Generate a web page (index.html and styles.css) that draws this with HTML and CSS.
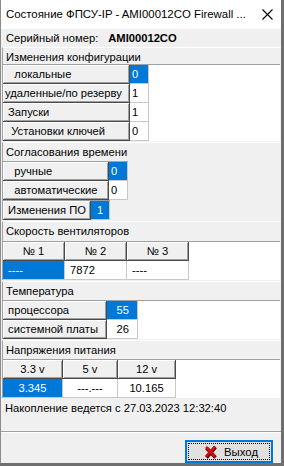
FILE: index.html
```html
<!DOCTYPE html>
<html lang="ru">
<head>
    <meta charset="UTF-8">
    <title>Состояние ФПСУ-IP</title>
    <link rel="stylesheet" href="styles.css">
</head>
<body>
    <div class="window">
        <div class="titlebar">
            <span class="title">Состояние ФПСУ-IP - AMI00012CO Firewall ...</span>
            <svg class="close" width="11" height="11" viewBox="0 0 11 11">
                <path d="M0.5 0.5 L10.5 10.5 M10.5 0.5 L0.5 10.5" stroke="#000" stroke-width="1.1" fill="none"/>
            </svg>
        </div>

        <div class="serial">
            <span>Серийный номер:</span>
            <b>AMI00012CO</b>
        </div>

        <div class="group g-config">
            <div class="caption">Изменения конфигурации</div>
            <div class="sg sg-config">
                <div class="fx">   локальные</div><div class="c sel">0</div>
                <div class="fx">удаленные/по резерву</div><div class="c">1</div>
                <div class="fx"> Запуски</div><div class="c">1</div>
                <div class="fx">  Установки ключей</div><div class="c">0</div>
            </div>
        </div>

        <div class="group g-time">
            <div class="caption">Согласования времени</div>
            <div class="sg sg-time">
                <div class="fx">   ручные</div><div class="c sel">0</div>
                <div class="fx">   автоматические</div><div class="c">0</div>
            </div>
        </div>

        <div class="group g-po">
            <div class="sg sg-po">
                <div class="fx"> Изменения ПО</div><div class="c sel ctr">1</div>
            </div>
        </div>

        <div class="group g-fans">
            <div class="caption">Скорость вентиляторов</div>
            <div class="sg sg-fans">
                <div class="fx ctr">№ 1</div><div class="fx ctr">№ 2</div><div class="fx ctr">№ 3</div>
                <div class="c sel"> ----</div><div class="c"> 7872</div><div class="c"> ----</div>
            </div>
        </div>

        <div class="group g-temp">
            <div class="caption">Температура</div>
            <div class="sg sg-temp">
                <div class="fx"> процессора</div><div class="c sel rt">55</div>
                <div class="fx"> системной платы</div><div class="c rt">26</div>
            </div>
        </div>

        <div class="group g-volt">
            <div class="caption">Напряжения питания</div>
            <div class="sg sg-volt">
                <div class="fx ctr">3.3 v</div><div class="fx ctr">5 v</div><div class="fx ctr">12 v</div>
                <div class="c sel ctr">3.345</div><div class="c ctr">---.---</div><div class="c ctr">10.165</div>
            </div>
        </div>

        <div class="since">Накопление ведется с 27.03.2023 12:32:40</div>

        <div class="buttons">
            <button class="btn-exit">
                <svg width="14" height="14" viewBox="0 0 14 14">
                    <path d="M2.5 3 L11.5 12.5 M11.5 2 L2.5 12.5" stroke="#5a0000" stroke-width="3.6" fill="none"/>
                    <path d="M2 2 L11 11.5 M11 1.5 L2 11.5" stroke="#d01010" stroke-width="2.6" fill="none"/>
                </svg>
                <span>Выход</span>
            </button>
        </div>
    </div>
</body>
</html>
```

FILE: styles.css
```css
body {
    margin: 0;
    background-color: #6f6f6f;
    font-family: "Liberation Sans", Arial, sans-serif;
    font-size: 11.2px;
    color: #000;
}
.window {
    width: 280px;
    height: 463px;
    background-color: #f0f0f0;
    border-left: 1px solid #8c8c8c;
    display: flex;
    flex-direction: column;
}
.titlebar {
    height: 30px;
    background: #fff;
    display: flex;
    align-items: center;
    padding-left: 5px;
    font-size: 11.4px;
}
.title {
    flex: 1;
    white-space: nowrap;
}
.close {
    margin-right: 8px;
}
.serial {
    height: 19px;
    display: flex;
    align-items: center;
    padding: 1px 0 0 5px;
    box-sizing: border-box;
}
.serial b {
    margin-left: 10px;
}
.group {
    margin-left: 1px;
    border-top: 1px solid #fff;
    border-left: 1px solid #a0a0a0;
    display: flex;
    flex-direction: column;
    align-items: flex-start;
}
.caption {
    height: 17px;
    line-height: 18px;
    padding-left: 3px;
}
.g-config .caption { height: 16px; }
.g-time { margin-top: 1px; }
.g-time .caption { height: 18px; line-height: 18px; }
.g-po { border-top: none; }
.g-fans { margin-top: 1px; }
.g-fans .caption { height: 19px; line-height: 19px; }
.g-temp { margin-top: 1px; }
.g-temp .caption { height: 18px; line-height: 18px; }
.g-volt { margin-top: 1px; }
.g-volt .caption { height: 18px; line-height: 18px; }

.sg {
    display: grid;
    background: #fff;
    border-top: 1px solid #a0a0a0;
}
.sg > div {
    height: 19px;
    line-height: 18px;
    padding: 0 2px;
    white-space: pre;
    overflow: hidden;
    box-sizing: border-box;
}
.sg-config { width: 277px; grid-template-columns: 127px 19px; }
.sg-time { width: 125px; grid-template-columns: 106px 19px; }
.sg-po { width: 107px; grid-template-columns: 88px 19px; }
.sg-fans { width: 277px; grid-template-columns: 62px 62px 62px; }
.sg-temp { width: 277px; grid-template-columns: 104px 31px; }
.sg-volt { width: 277px; grid-template-columns: 60px 55px 58px; }

.fx {
    background: #f0f0f0;
    border-right: 1px solid #4a4a4a;
    border-bottom: 1px solid #4a4a4a;
    box-shadow: inset 1px 1px #fff, inset -1px -1px #a0a0a0;
}
.c {
    border-right: 1px solid #c8c8c8;
    border-bottom: 1px solid #c8c8c8;
}
.sel {
    background: #0078d7;
    color: #fff;
}
.ctr { text-align: center; }
.rt { text-align: right; padding-right: 8px !important; }

.since {
    height: 18px;
    line-height: 18px;
    padding-left: 4px;
    margin-top: 1px;
}
.buttons {
    margin-top: 14px;
    border-top: 1px solid #a0a0a0;
    box-shadow: inset 0 1px #fff;
    flex: 1;
    display: flex;
    justify-content: flex-end;
    align-items: flex-start;
    padding: 8px 8px 0 0;
}
.btn-exit {
    width: 88px;
    height: 23px;
    border: 2px solid #0078d7;
    background: #e1e1e1;
    outline: 1px dotted #000;
    outline-offset: -4px;
    font-family: "Liberation Sans", Arial, sans-serif;
    font-size: 11.4px;
    display: flex;
    align-items: center;
    justify-content: center;
    gap: 6px;
    padding: 0 0 0 4px;
}
```
